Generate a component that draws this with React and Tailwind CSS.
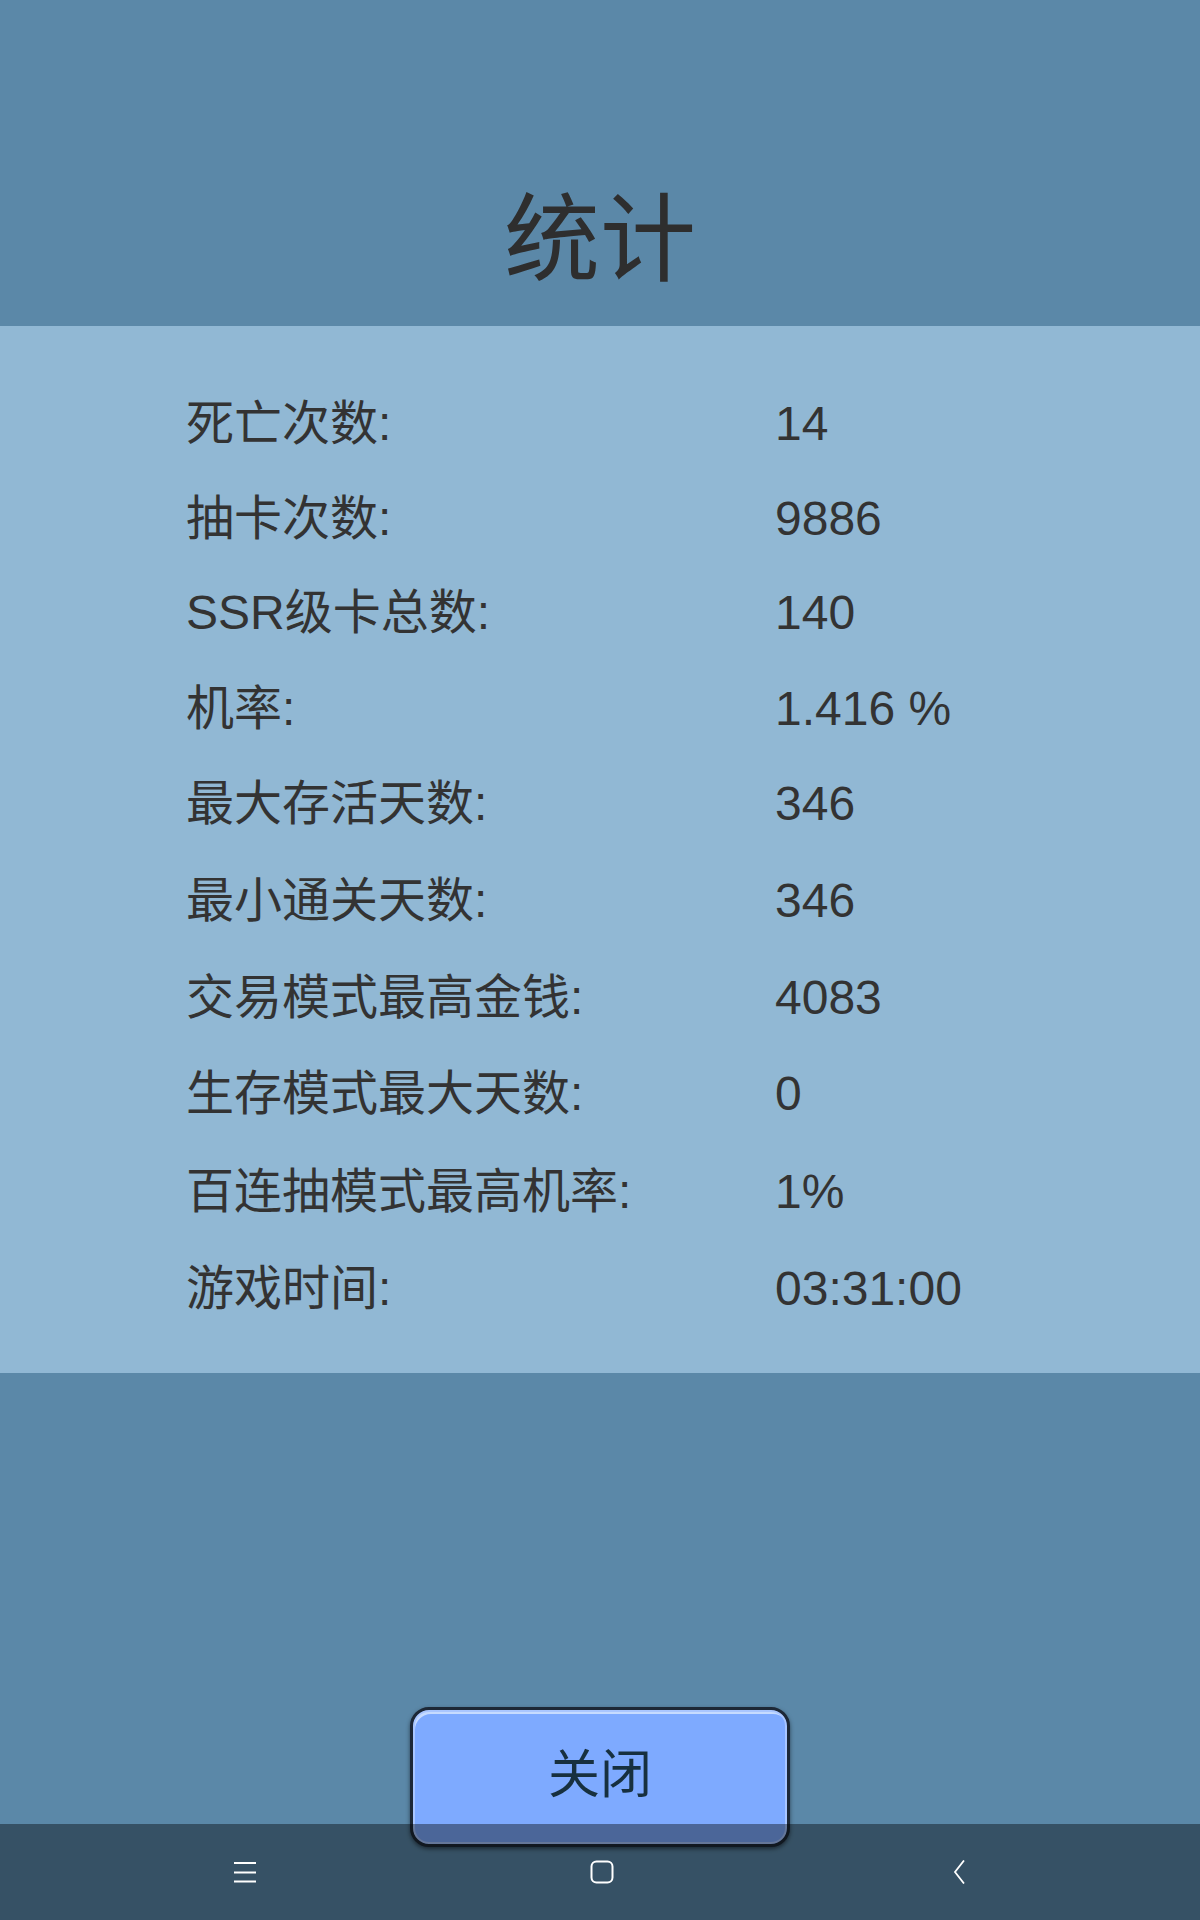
import React from "react";

const rows = [
  ["死亡次数:", "14", ""],
  ["抽卡次数:", "9886", "mt-[47px]"],
  ["SSR级卡总数:", "140", "mt-[46px]"],
  ["机率:", "1.416 %", "mt-[48px]"],
  ["最大存活天数:", "346", "mt-[47px]"],
  ["最小通关天数:", "346", "mt-[49px]"],
  ["交易模式最高金钱:", "4083", "mt-[49px]"],
  ["生存模式最大天数:", "0", "mt-[48px]"],
  ["百连抽模式最高机率:", "1%", "mt-[50px]"],
  ["游戏时间:", "03:31:00", "mt-[49px]"],
];

export default function App() {
  return (
    <div
      className="relative w-full h-[1920px] overflow-hidden bg-[#5b88a8] text-[#333333] flex flex-col"
      style={{ fontFamily: '"Liberation Sans", "Noto Sans CJK SC", sans-serif' }}
    >
      <div className="h-[326px] flex justify-center items-start pt-[192px]">
        <h1 className="text-[96px] leading-[96px] font-normal text-[#2e2e2e]">统计</h1>
      </div>

      <div className="h-[1047px] bg-[#91b8d4] pt-[74px] pl-[186px] flex flex-col">
        {rows.map(([label, value, gap]) => (
          <div key={label} className={`h-[48px] flex items-center text-[48px] leading-none ${gap}`}>
            <div className="w-[589px]">{label}</div>
            <div>{value}</div>
          </div>
        ))}
      </div>

      <div className="flex-1 flex justify-center pt-[334px]">
        <button className="w-[380px] h-[140px] rounded-[19px] border-[3px] border-[#1d2836] bg-[#7eaaff] shadow-[0_2px_4px_rgba(0,0,0,0.5),inset_0_0_0_2px_#a9c6ff,inset_2px_4px_0_#c6dbff] flex items-center justify-center pb-[4px] text-[52px] leading-none text-[#17303f]">
          关闭
        </button>
      </div>

      <div className="absolute bottom-0 left-0 w-full h-[96px] bg-black/40 flex items-center justify-between pl-[233px] pr-[230px]">
        <svg width="24" height="24" viewBox="0 0 24 24" fill="none" stroke="white" strokeWidth="2.2">
          <path d="M1 3h22M1 12.5h22M1 21.5h22" />
        </svg>
        <svg width="24" height="24" viewBox="0 0 24 24" fill="none" stroke="white" strokeWidth="2">
          <rect x="1.5" y="1.5" width="21" height="21" rx="5" />
        </svg>
        <svg width="24" height="24" viewBox="0 0 24 24" fill="none" stroke="white" strokeWidth="1.8">
          <path d="M18 0.5L9 12l9 11.5" />
        </svg>
      </div>
    </div>
  );
}
